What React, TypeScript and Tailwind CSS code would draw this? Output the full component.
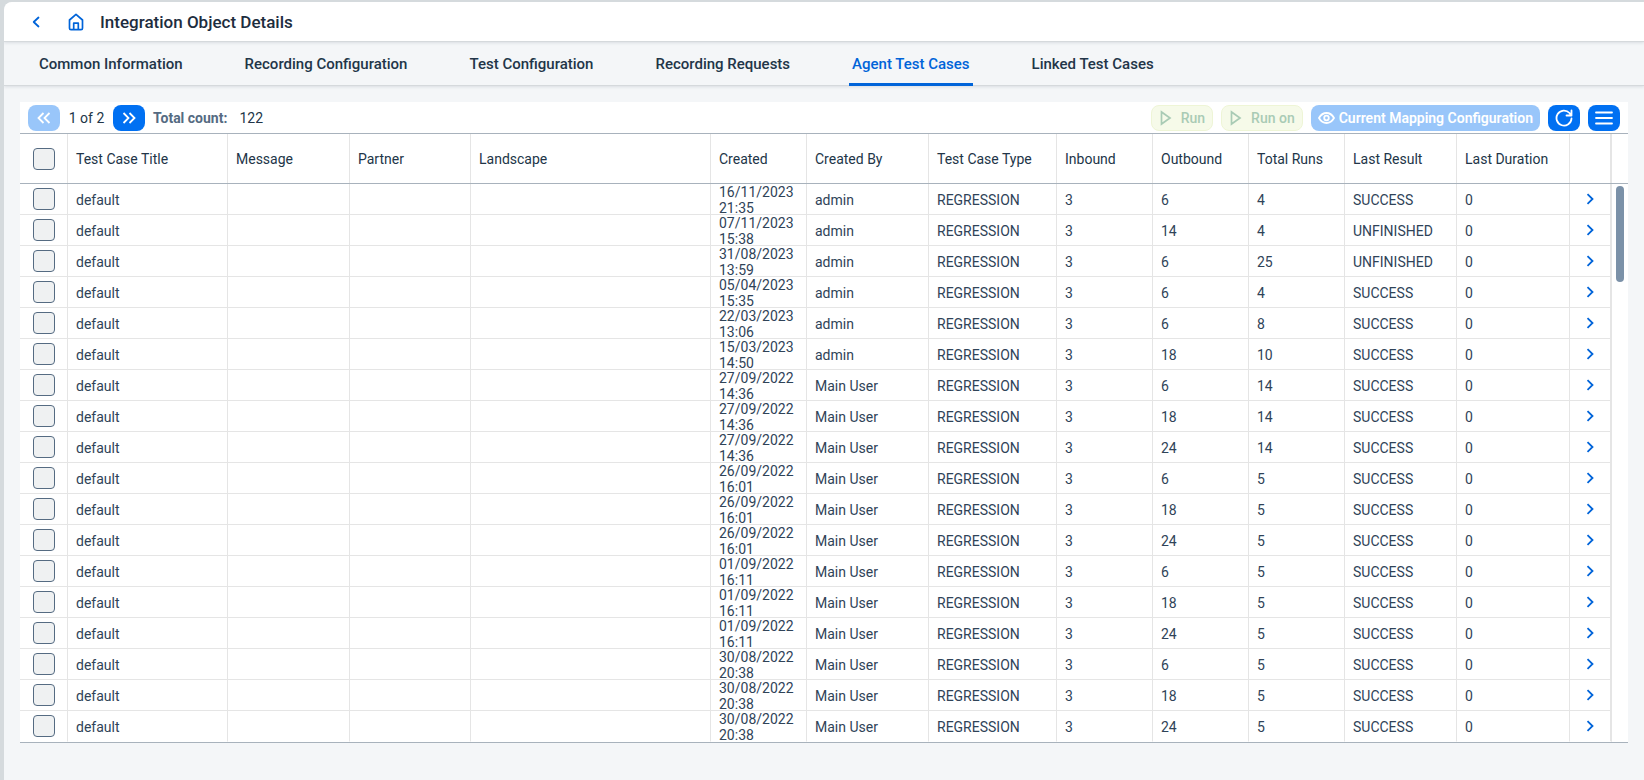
import clsx from "clsx";

const tabs = [
  "Common Information",
  "Recording Configuration",
  "Test Configuration",
  "Recording Requests",
  "Agent Test Cases",
  "Linked Test Cases",
];

const columns = [
  { title: "Test Case Title", width: "w-[160px]" },
  { title: "Message", width: "w-[122px]" },
  { title: "Partner", width: "w-[121px]" },
  { title: "Landscape", width: "w-[240px]" },
  { title: "Created", width: "w-[96px]" },
  { title: "Created By", width: "w-[122px]" },
  { title: "Test Case Type", width: "w-[128px]" },
  { title: "Inbound", width: "w-[96px]" },
  { title: "Outbound", width: "w-[96px]" },
  { title: "Total Runs", width: "w-[96px]" },
  { title: "Last Result", width: "w-[112px]" },
  { title: "Last Duration", width: "w-[113px]" },
];

// created, created by, outbound, total runs, last result
const testCases: [string, string, number, number, string][] = [
  ["16/11/2023 21:35", "admin", 6, 4, "SUCCESS"],
  ["07/11/2023 15:38", "admin", 14, 4, "UNFINISHED"],
  ["31/08/2023 13:59", "admin", 6, 25, "UNFINISHED"],
  ["05/04/2023 15:35", "admin", 6, 4, "SUCCESS"],
  ["22/03/2023 13:06", "admin", 6, 8, "SUCCESS"],
  ["15/03/2023 14:50", "admin", 18, 10, "SUCCESS"],
  ["27/09/2022 14:36", "Main User", 6, 14, "SUCCESS"],
  ["27/09/2022 14:36", "Main User", 18, 14, "SUCCESS"],
  ["27/09/2022 14:36", "Main User", 24, 14, "SUCCESS"],
  ["26/09/2022 16:01", "Main User", 6, 5, "SUCCESS"],
  ["26/09/2022 16:01", "Main User", 18, 5, "SUCCESS"],
  ["26/09/2022 16:01", "Main User", 24, 5, "SUCCESS"],
  ["01/09/2022 16:11", "Main User", 6, 5, "SUCCESS"],
  ["01/09/2022 16:11", "Main User", 18, 5, "SUCCESS"],
  ["01/09/2022 16:11", "Main User", 24, 5, "SUCCESS"],
  ["30/08/2022 20:38", "Main User", 6, 5, "SUCCESS"],
  ["30/08/2022 20:38", "Main User", 18, 5, "SUCCESS"],
  ["30/08/2022 20:38", "Main User", 24, 5, "SUCCESS"],
];

function Header() {
  return (
    <header className="relative flex h-10 items-center border-b border-[#d5d9dc] bg-white pl-6 shadow-[0_1px_3px_rgba(34,53,72,0.12)]">
      <button aria-label="Back" className="flex h-6 w-4 items-center justify-center text-[#0064d9]">
        <svg width="8" height="12" viewBox="0 0 8 12" fill="none" stroke="currentColor" strokeWidth="1.8" strokeLinecap="round" strokeLinejoin="round">
          <path d="M6.500 1.500 1.700 6l4.800 4.500" />
        </svg>
      </button>
      <a href="#home" aria-label="Home" className="ml-6 text-[#0064d9]">
        <svg width="16" height="18" viewBox="0 0 16 18" fill="none" stroke="currentColor" strokeWidth="1.700" strokeLinejoin="round">
          <path d="M1.500 7 8 1.300 14.500 7v8.200a1.500 1.500 0 0 1-1.500 1.500H3a1.500 1.500 0 0 1-1.500-1.500z" />
          <path d="M5.700 16.500v-6.300h4.600v6.300" />
        </svg>
      </a>
      <h1 className="ml-4 text-[17px] font-medium text-[#1d2d3e]">Integration Object Details</h1>
    </header>
  );
}

function TabBar() {
  return (
    <nav className="flex h-11 gap-14 border-b border-[#d5d9dc] pl-8 shadow-[0_1px_3px_rgba(34,53,72,0.12)]">
      {tabs.map((tab) => {
        const active = tab === "Agent Test Cases";
        return (
          <button
            key={tab}
            aria-current={active ? "page" : undefined}
            className={clsx(
              "-mb-px border-b-3 px-[3px] pt-[3px] text-[15px] font-medium whitespace-nowrap",
              active ? "border-[#0064d9] text-[#0064d9]" : "border-transparent"
            )}
          >
            {tab}
          </button>
        );
      })}
    </nav>
  );
}

function Toolbar() {
  const square = "flex h-[26px] w-8 items-center justify-center rounded-lg bg-[#0070f2] text-white";
  const run =
    "flex h-[26px] items-center rounded-lg border border-[#eef5d6] bg-[#f6fae9] px-[7px] font-medium text-[#a9cbb5]";

  return (
    <div className="flex h-[31px] items-center px-2">
      <button disabled aria-label="Previous page" className="flex h-[26px] w-8 items-center justify-center rounded-lg bg-[#99c6fa] text-white">
        <svg width="14" height="12" viewBox="0 0 14 12" fill="none" stroke="currentColor" strokeWidth="1.800">
          <path d="M6.500 1 1.500 6l5 5M12.500 1l-5 5 5 5" />
        </svg>
      </button>
      <span className="w-[53px] text-center">1 of 2</span>
      <button aria-label="Next page" className={square}>
        <svg width="14" height="12" viewBox="0 0 14 12" fill="none" stroke="currentColor" strokeWidth="1.800">
          <path d="m1.500 1 5 5-5 5M7.500 1l5 5-5 5" />
        </svg>
      </button>
      <span className="ml-2 font-bold text-[#556b82]">Total count:</span>
      <span className="ml-3">122</span>

      <div className="ml-auto flex gap-2">
        <button disabled className={run}>
          <PlayIcon />
          Run
        </button>
        <button disabled className={run}>
          <PlayIcon />
          Run on
        </button>
        <button disabled className="flex h-[26px] items-center gap-1 rounded-lg bg-[#99c6fa] px-[7px] font-semibold text-white">
          <svg width="17" height="12" viewBox="0 0 17 12" fill="none" stroke="currentColor" strokeWidth="1.800">
            <path d="M1 6c1.700-3 4.300-5 7.500-5S14.300 3 16 6c-1.700 3-4.300 5-7.500 5S2.700 9 1 6z" />
            <circle cx="8.500" cy="6" r="2.300" />
          </svg>
          Current Mapping Configuration
        </button>
        <button aria-label="Refresh" className={square}>
          <svg width="18" height="18" viewBox="0 0 18 18" fill="none" stroke="currentColor" strokeWidth="1.800" strokeLinecap="round" strokeLinejoin="round">
            <path d="M16.500 9.500A7.500 7.500 0 1 1 14.500 4L16 6M16.500 1.500V6.500H11.500" />
          </svg>
        </button>
        <button aria-label="Menu" className={square}>
          <svg width="18" height="14" viewBox="0 0 18 14" fill="none" stroke="currentColor" strokeWidth="1.800" strokeLinecap="round">
            <path d="M1 1.500h16M1 7h16M1 12.500h16" />
          </svg>
        </button>
      </div>
    </div>
  );
}

function PlayIcon() {
  return (
    <svg className="mr-2" width="14" height="16" viewBox="0 0 14 16" fill="none" stroke="currentColor" strokeWidth="1.700">
      <path d="M2.500 2v12L11 8z" />
    </svg>
  );
}

function Checkbox({ label }: { label: string }) {
  return (
    <input
      type="checkbox"
      aria-label={label}
      className="block size-[22px] appearance-none rounded-[4px] border border-[#556b82] bg-[#eff1f2]"
    />
  );
}

function TestCaseTable() {
  return (
    <div className="flex border-y border-[#a8b2bc] bg-white">
      <table className="w-full table-fixed border-separate border-spacing-0">
        <thead>
          <tr className="h-[50px] text-left *:border-b *:border-[#a8b2bc]">
            <th className="w-12 pl-[13px] shadow-[inset_-1px_0_#e5e5e5]">
              <Checkbox label="Select all" />
            </th>
            {columns.map(({ title, width }) => (
              <th key={title} className={clsx(width, "pl-2 font-normal shadow-[inset_-1px_0_#e5e5e5]")}>
                {title}
              </th>
            ))}
            <th aria-label="Open" className="w-[42px] shadow-[inset_-2px_0_#e5e5e5]" />
          </tr>
        </thead>
        <tbody className="text-[#2f4358] [&>tr:last-child>td]:border-b-transparent">
          {testCases.map(([created, createdBy, outbound, runs, result], i) => {
            const cells = ["default", "", "", "", created, createdBy, "REGRESSION", 3, outbound, runs, result, 0];
            return (
              <tr key={i}>
                <td className="border-r border-b border-[#e5e5e5] pl-[13px]">
                  <Checkbox label={`Select test case ${i + 1}`} />
                </td>
                {cells.map((cell, j) => (
                  <td key={j} className="border-r border-b border-[#e5e5e5] pl-2">
                    <div className="flex h-[30px] items-center pt-[2px]">{cell}</div>
                  </td>
                ))}
                <td className="border-r-2 border-b border-[#e5e5e5]">
                  <button aria-label="Open test case" className="flex h-[30px] w-full items-center justify-center text-[#0064d9]">
                    <svg width="8" height="12" viewBox="0 0 8 12" fill="none" stroke="currentColor" strokeWidth="1.800">
                      <path d="m1.500 1.200 5 4.800-5 4.800" />
                    </svg>
                  </button>
                </td>
              </tr>
            );
          })}
        </tbody>
      </table>
      <div className="w-4 shrink-0">
        <div className="h-[50px] border-b border-[#a8b2bc]" />
        <div className="mt-[2px] ml-1 h-24 w-2 rounded-full bg-[#7b91a8]" />
      </div>
    </div>
  );
}

export default function App() {
  return (
    <div className="min-h-screen bg-[#d5dadd] pt-[2px] pl-1 font-[Roboto,sans-serif] text-sm leading-4 text-[#223548]">
      <div className="min-h-[calc(100vh-2px)] overflow-hidden rounded-tl-lg bg-[#f4f6f8]">
        <Header />
        <TabBar />
        <main className="px-4 pt-4">
          <section className="bg-white">
            <Toolbar />
            <TestCaseTable />
          </section>
        </main>
      </div>
    </div>
  );
}
